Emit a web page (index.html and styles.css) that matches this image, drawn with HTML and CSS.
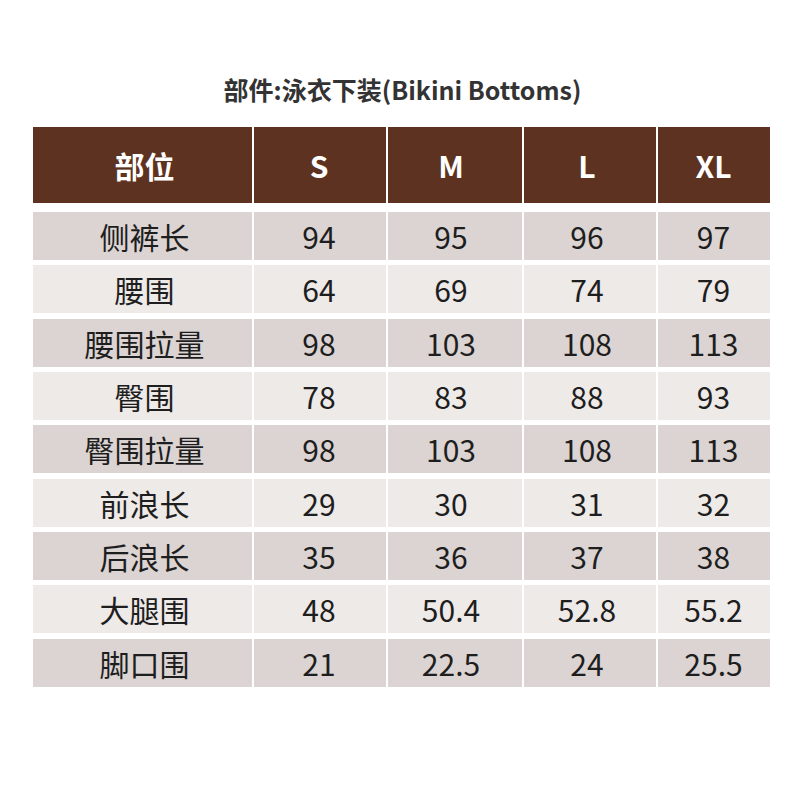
FILE: index.html
```html
<!DOCTYPE html>
<html lang="zh-CN">
<head>
<meta charset="utf-8">
<title>部件:泳衣下装(Bikini Bottoms)</title>
<link rel="stylesheet" href="styles.css">
</head>
<body>
<div class="page">
  <h1 class="title">部件:泳衣下装(Bikini Bottoms)</h1>
  <div class="table">
    <div class="row head"><div class="cell">部位</div><div class="cell">S</div><div class="cell">M</div><div class="cell">L</div><div class="cell">XL</div></div>
    <div class="row dark"><div class="cell">侧裤长</div><div class="cell">94</div><div class="cell">95</div><div class="cell">96</div><div class="cell">97</div></div>
    <div class="row light"><div class="cell">腰围</div><div class="cell">64</div><div class="cell">69</div><div class="cell">74</div><div class="cell">79</div></div>
    <div class="row dark"><div class="cell">腰围拉量</div><div class="cell">98</div><div class="cell">103</div><div class="cell">108</div><div class="cell">113</div></div>
    <div class="row light"><div class="cell">臀围</div><div class="cell">78</div><div class="cell">83</div><div class="cell">88</div><div class="cell">93</div></div>
    <div class="row dark"><div class="cell">臀围拉量</div><div class="cell">98</div><div class="cell">103</div><div class="cell">108</div><div class="cell">113</div></div>
    <div class="row light"><div class="cell">前浪长</div><div class="cell">29</div><div class="cell">30</div><div class="cell">31</div><div class="cell">32</div></div>
    <div class="row dark"><div class="cell">后浪长</div><div class="cell">35</div><div class="cell">36</div><div class="cell">37</div><div class="cell">38</div></div>
    <div class="row light"><div class="cell">大腿围</div><div class="cell">48</div><div class="cell">50.4</div><div class="cell">52.8</div><div class="cell">55.2</div></div>
    <div class="row dark"><div class="cell">脚口围</div><div class="cell">21</div><div class="cell">22.5</div><div class="cell">24</div><div class="cell">25.5</div></div>
  </div>
</div>
</body>
</html>
```

FILE: styles.css
```css
* { box-sizing: border-box; }
html, body {
  margin: 0;
  padding: 0;
  background: #ffffff;
}
body {
  font-family: "Noto Sans CJK SC", "Noto Sans", sans-serif;
  color: #1e1e1e;
}
.page {
  width: 800px;
  height: 800px;
  padding: 72px 0 0 33px;
}
.title {
  margin: 0;
  width: 737px;
  text-align: center;
  font-size: 25px;
  font-weight: 700;
  line-height: 34px;
  color: #333333;
  padding-left: 2px;
}
.table {
  margin-top: 21px;
  width: 737px;
  display: flex;
  flex-direction: column;
  gap: 5.35px;
}
.row {
  display: grid;
  grid-template-columns: 219px 132px 134px 132px 112px;
  column-gap: 2px;
  height: 48px;
}
.cell {
  display: flex;
  align-items: center;
  justify-content: center;
  font-size: 30px;
  line-height: 1;
}
.cell:nth-child(1) { padding-left: 4px; }
.cell:nth-child(2) { padding-right: 2px; }
.cell:nth-child(3) { padding-right: 8px; }
.cell:nth-child(4) { padding-right: 6px; }
.cell:nth-child(5) { padding-right: 1px; }
.head {
  height: 76px;
  margin-bottom: 3.5px;
}
.head .cell {
  background: #5e3220;
  color: #ffffff;
  font-weight: 700;
  font-size: 30px;
}
.dark .cell { background: #dbd4d2; }
.light .cell { background: #eeeae8; }
```
